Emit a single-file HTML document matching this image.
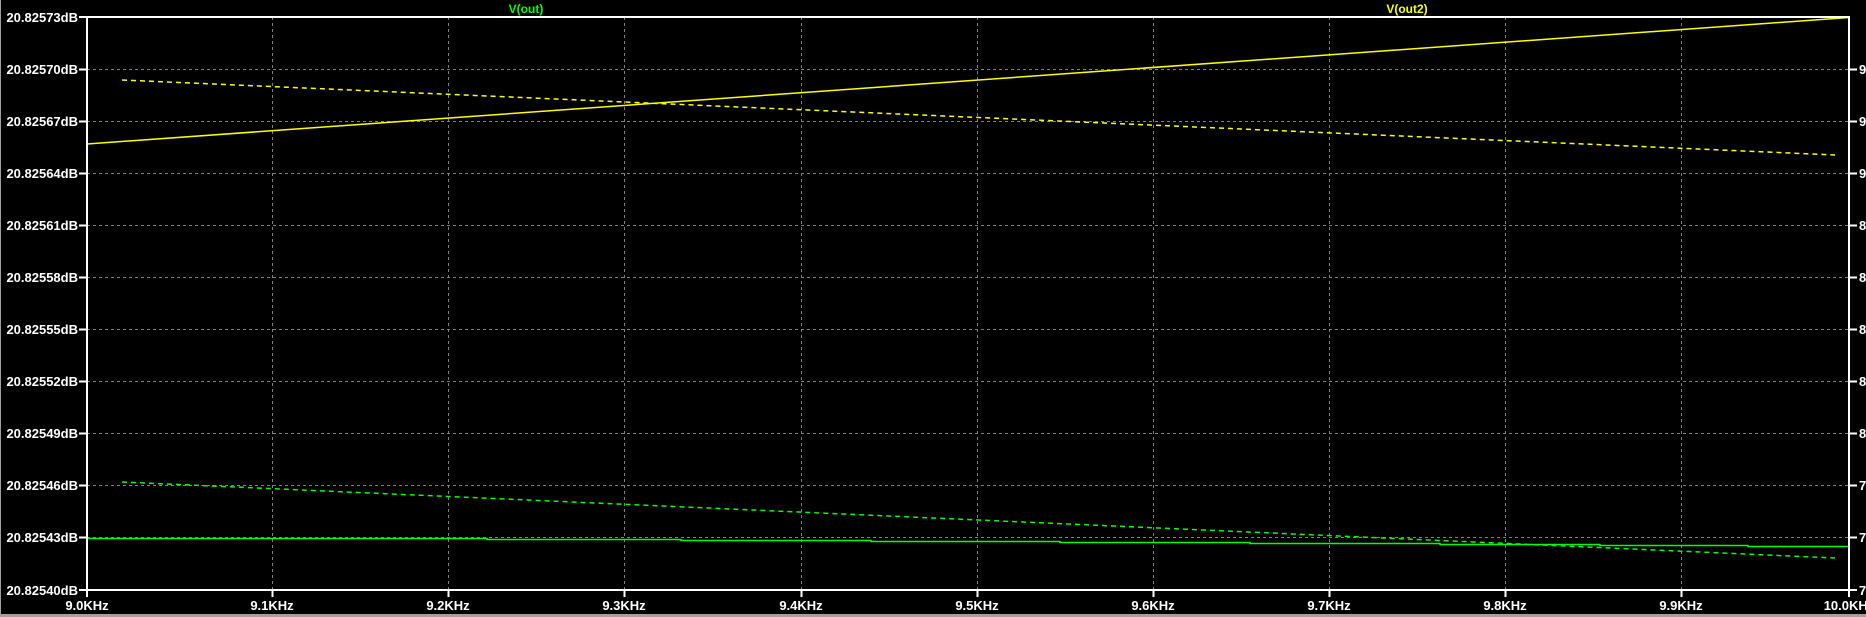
<!DOCTYPE html>
<html><head><meta charset="utf-8"><style>
html,body{margin:0;padding:0;background:#000;width:1866px;height:617px;overflow:hidden}
svg{display:block}
text{font-family:"Liberation Sans",sans-serif;font-weight:bold;font-size:13px;fill:#fff}
</style></head><body>
<svg width="1866" height="617" viewBox="0 0 1866 617" shape-rendering="crispEdges">
<rect width="1866" height="617" fill="#000"/>
<rect x="0" y="0" width="1" height="617" fill="#a0a0a0"/>
<rect x="0" y="614" width="1866" height="3" fill="#a0a0a0"/>
<g stroke="#808080" stroke-width="1" stroke-dasharray="3,3">
<line x1="87" y1="69.5" x2="1849" y2="69.5"/><line x1="87" y1="121.5" x2="1849" y2="121.5"/>
<line x1="87" y1="173.5" x2="1849" y2="173.5"/><line x1="87" y1="225.5" x2="1849" y2="225.5"/>
<line x1="87" y1="277.5" x2="1849" y2="277.5"/><line x1="87" y1="329.5" x2="1849" y2="329.5"/>
<line x1="87" y1="381.5" x2="1849" y2="381.5"/><line x1="87" y1="433.5" x2="1849" y2="433.5"/>
<line x1="87" y1="485.5" x2="1849" y2="485.5"/><line x1="87" y1="537.5" x2="1849" y2="537.5"/>
<line x1="272.5" y1="17" x2="272.5" y2="590"/><line x1="448.5" y1="17" x2="448.5" y2="590"/>
<line x1="624.5" y1="17" x2="624.5" y2="590"/><line x1="801.5" y1="17" x2="801.5" y2="590"/>
<line x1="977.5" y1="17" x2="977.5" y2="590"/><line x1="1153.5" y1="17" x2="1153.5" y2="590"/>
<line x1="1329.5" y1="17" x2="1329.5" y2="590"/><line x1="1505.5" y1="17" x2="1505.5" y2="590"/>
<line x1="1681.5" y1="17" x2="1681.5" y2="590"/>
</g>
<g fill="none" stroke-width="1.5" shape-rendering="auto">
<line x1="122" y1="80" x2="1835" y2="155" stroke="#ffff00" stroke-dasharray="5,4"/>
<line x1="87" y1="144" x2="1849" y2="17.5" stroke="#ffff00"/>
<line x1="122" y1="482" x2="1835" y2="558" stroke="#00ff00" stroke-dasharray="5,4"/>
<polyline stroke="#00ff00" points="87,538.5 487,538.5 487,539.5 681,539.5 681,540.5 871,540.5 871,541.5 1060,541.5 1060,542.5 1250,542.5 1250,543.5 1440,543.5 1440,544.5 1600,544.5 1600,545.5 1748,545.5 1748,546.5 1849,546.5"/>
</g>
<g stroke="#fff" stroke-width="2" fill="none">
<rect x="87" y="17" width="1762" height="573"/>
</g>
<g stroke="#fff" stroke-width="2">
<line x1="79" y1="17" x2="87" y2="17"/><line x1="79" y1="69.5" x2="87" y2="69.5"/><line x1="79" y1="121.5" x2="87" y2="121.5"/><line x1="79" y1="173.5" x2="87" y2="173.5"/><line x1="79" y1="225.5" x2="87" y2="225.5"/><line x1="79" y1="277.5" x2="87" y2="277.5"/><line x1="79" y1="329.5" x2="87" y2="329.5"/><line x1="79" y1="381.5" x2="87" y2="381.5"/><line x1="79" y1="433.5" x2="87" y2="433.5"/><line x1="79" y1="485.5" x2="87" y2="485.5"/><line x1="79" y1="537.5" x2="87" y2="537.5"/><line x1="79" y1="590" x2="87" y2="590"/>
<line x1="1849" y1="69.5" x2="1857" y2="69.5"/><line x1="1849" y1="121.5" x2="1857" y2="121.5"/><line x1="1849" y1="173.5" x2="1857" y2="173.5"/><line x1="1849" y1="225.5" x2="1857" y2="225.5"/><line x1="1849" y1="277.5" x2="1857" y2="277.5"/><line x1="1849" y1="329.5" x2="1857" y2="329.5"/><line x1="1849" y1="381.5" x2="1857" y2="381.5"/><line x1="1849" y1="433.5" x2="1857" y2="433.5"/><line x1="1849" y1="485.5" x2="1857" y2="485.5"/><line x1="1849" y1="537.5" x2="1857" y2="537.5"/><line x1="1849" y1="590" x2="1857" y2="590"/>
<line x1="87" y1="590" x2="87" y2="597"/><line x1="272.5" y1="590" x2="272.5" y2="597"/><line x1="448.5" y1="590" x2="448.5" y2="597"/><line x1="624.5" y1="590" x2="624.5" y2="597"/><line x1="801.5" y1="590" x2="801.5" y2="597"/><line x1="977.5" y1="590" x2="977.5" y2="597"/><line x1="1153.5" y1="590" x2="1153.5" y2="597"/><line x1="1329.5" y1="590" x2="1329.5" y2="597"/><line x1="1505.5" y1="590" x2="1505.5" y2="597"/><line x1="1681.5" y1="590" x2="1681.5" y2="597"/><line x1="1849" y1="590" x2="1849" y2="597"/>
</g>
<g text-anchor="end">
<text x="78" y="22">20.82573dB</text><text x="78" y="74">20.82570dB</text><text x="78" y="126">20.82567dB</text><text x="78" y="178">20.82564dB</text><text x="78" y="230">20.82561dB</text><text x="78" y="282">20.82558dB</text><text x="78" y="334">20.82555dB</text><text x="78" y="386">20.82552dB</text><text x="78" y="438">20.82549dB</text><text x="78" y="490">20.82546dB</text><text x="78" y="542">20.82543dB</text><text x="78" y="595">20.82540dB</text>
</g>
<g>
<text x="1859" y="74">9</text><text x="1859" y="126">9</text><text x="1859" y="178">9</text><text x="1859" y="230">8</text><text x="1859" y="282">8</text><text x="1859" y="334">8</text><text x="1859" y="386">8</text><text x="1859" y="438">8</text><text x="1859" y="490">7</text><text x="1859" y="542">7</text><text x="1859" y="595">7</text>
</g>
<g text-anchor="middle">
<text x="87" y="610">9.0KHz</text><text x="272" y="610">9.1KHz</text><text x="448" y="610">9.2KHz</text><text x="624" y="610">9.3KHz</text><text x="801" y="610">9.4KHz</text><text x="977" y="610">9.5KHz</text><text x="1153" y="610">9.6KHz</text><text x="1329" y="610">9.7KHz</text><text x="1505" y="610">9.8KHz</text><text x="1681" y="610">9.9KHz</text><text x="1849" y="610">10.0KHz</text>
</g>
<text x="526" y="13" text-anchor="middle" style="fill:#00ff00;font-size:12px">V(out)</text>
<text x="1407" y="13" text-anchor="middle" style="fill:#ffff00;font-size:12px">V(out2)</text>
</svg>
</body></html>
